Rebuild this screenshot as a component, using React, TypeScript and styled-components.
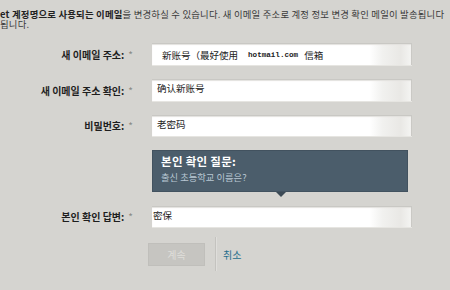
import React from "react";
import styled, { createGlobalStyle } from "styled-components";

const GlobalStyle = createGlobalStyle`
  html, body {
    margin: 0;
    padding: 0;
    background: #d5d4d0;
  }
  body {
    font-family: "Noto Sans CJK KR", "Noto Sans", sans-serif;
    color: #2a2a2a;
    overflow: hidden;
  }
`;

const Page = styled.div`
  width: 450px;
  height: 290px;
  overflow: hidden;
`;

const Intro = styled.div`
  padding-top: 9px;
  font-size: 9.4px;
  color: #3a3a3a;
  white-space: nowrap;
  letter-spacing: 0.2px;

  b {
    font-weight: 700;
    color: #222;
  }
`;

const IntroLine = styled.div`
  height: 10px;
  line-height: 10px;
`;

const Form = styled.form`
  display: flex;
  flex-direction: column;
  gap: 14px;
  margin-top: 14px;
`;

const Row = styled.div<{ $h?: number }>`
  display: flex;
  align-items: center;
  height: ${(p) => p.$h ?? 22}px;
`;

const Label = styled.label`
  width: 133px;
  flex: none;
  text-align: right;
  font-size: 10px;
  font-weight: 700;
  color: #1e1e1e;
  white-space: nowrap;
  margin-right: 19px;

  span {
    font-weight: 400;
    color: #8a8a86;
    margin-left: 4px;
  }
`;

const Field = styled.div<{ $pad: number; $top?: boolean }>`
  box-sizing: border-box;
  width: 260px;
  height: 100%;
  display: flex;
  align-items: ${(p) => (p.$top ? "flex-start" : "center")};
  padding: ${(p) => (p.$top ? "1px" : "0")} 0 0 ${(p) => p.$pad}px;
  background: linear-gradient(
    to right,
    #ffffff 0,
    #ffffff 84%,
    #f1f1ef 89%,
    #e9e8e5 96%,
    #f4f4f2 100%
  );
  border-top: 1px solid #c9c8c4;
  border-right: 1px solid #cac9c5;
  box-shadow: 0 1px 0 #e6e5e1, inset 0 1px 1px #e3e2de;
  font-size: 9.5px;
  color: #222;
  white-space: nowrap;
`;

const Mono = styled.span`
  font-family: "Liberation Mono", monospace;
  font-size: 7.6px;
  font-weight: 700;
  margin: 0 6px 0 10px;
`;

const Question = styled.div`
  position: relative;
  box-sizing: border-box;
  width: 256px;
  height: 42px;
  margin-left: 152px;
  padding: 3px 8px;
  background: #4b5d6b;
  border: 1px solid #42525f;
  color: #fff;

  &::after {
    content: "";
    position: absolute;
    left: 123px;
    bottom: -6px;
    border-left: 5px solid transparent;
    border-right: 5px solid transparent;
    border-top: 5px solid #3c4a55;
  }
`;

const QTitle = styled.div`
  font-size: 11.5px;
  font-weight: 700;
  line-height: 14px;
  letter-spacing: 0.3px;
`;

const QText = styled.div`
  margin-top: 3px;
  font-size: 9.3px;
  line-height: 12px;
  color: #b9c8d4;
`;

const Actions = styled.div`
  display: flex;
  align-items: center;
  margin: 10px 0 0 148px;
  height: 34px;
`;

const Continue = styled.button`
  width: 57px;
  height: 23px;
  padding: 0;
  background: #c6c5c1;
  border: 1px solid #c0bfbb;
  color: #dfdeda;
  font-family: "Noto Sans CJK KR", sans-serif;
  font-size: 10px;
`;

const Divider = styled.div`
  width: 1px;
  height: 34px;
  margin: 0 7px 0 10px;
  background: #c4c3bf;
  box-shadow: 1px 0 0 #dfdedb;
`;

const Cancel = styled.a`
  font-size: 10px;
  color: #256d8c;
  text-decoration: none;
`;

export default function App() {
  return (
    <Page>
      <GlobalStyle />
      <Intro>
        <IntroLine>
          <b>et 계정명으로 사용되는 이메일</b>을 변경하실 수 있습니다. 새
          이메일 주소로 계정 정보 변경 확인 메일이 발송됩니다
        </IntroLine>
        <IntroLine>됩니다.</IntroLine>
      </Intro>
      <Form>
        <Row>
          <Label>
            새 이메일 주소:<span>*</span>
          </Label>
          <Field $pad={10}>
            新账号（最好使用<Mono>hotmail.com</Mono>信箱
          </Field>
        </Row>
        <Row>
          <Label>
            새 이메일 주소 확인:<span>*</span>
          </Label>
          <Field $pad={5} $top>
            确认新账号
          </Field>
        </Row>
        <Row $h={21}>
          <Label>
            비밀번호:<span>*</span>
          </Label>
          <Field $pad={5} $top>
            老密码
          </Field>
        </Row>
        <Question>
          <QTitle>본인 확인 질문:</QTitle>
          <QText>출신 초등학교 이름은?</QText>
        </Question>
        <Row $h={21}>
          <Label>
            본인 확인 답변:<span>*</span>
          </Label>
          <Field $pad={1} $top>
            密保
          </Field>
        </Row>
      </Form>
      <Actions>
        <Continue type="button">계속</Continue>
        <Divider />
        <Cancel href="#">취소</Cancel>
      </Actions>
    </Page>
  );
}
